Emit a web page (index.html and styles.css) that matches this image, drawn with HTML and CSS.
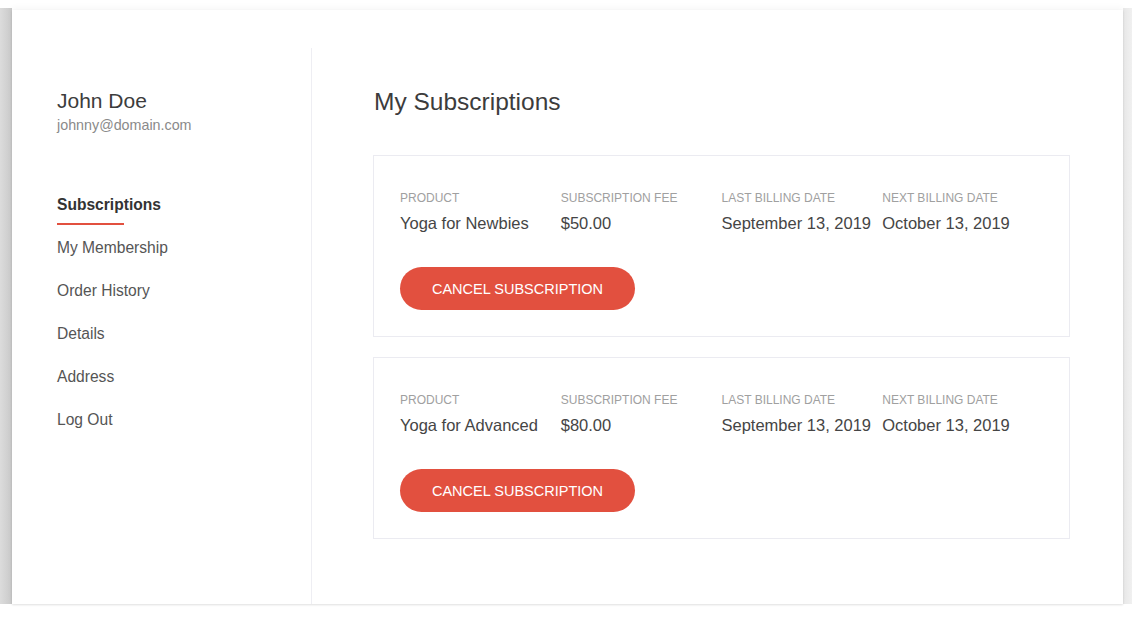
FILE: index.html
```html
<!DOCTYPE html>
<html lang="en">
<head>
<meta charset="utf-8">
<title>My Subscriptions</title>
<link rel="stylesheet" href="styles.css">
</head>
<body>
<div class="page">
  <div class="frame">
    <aside class="sidebar">
      <div class="user">
        <div class="user-name">John Doe</div>
        <div class="user-email">johnny@domain.com</div>
      </div>
      <nav class="nav">
        <a class="nav-item active">Subscriptions</a>
        <a class="nav-item">My Membership</a>
        <a class="nav-item">Order History</a>
        <a class="nav-item">Details</a>
        <a class="nav-item">Address</a>
        <a class="nav-item">Log Out</a>
      </nav>
    </aside>
    <main class="main">
      <h1 class="title">My Subscriptions</h1>
      <section class="sub-card">
        <div class="sub-grid">
          <div class="field"><div class="label">Product</div><div class="value">Yoga for Newbies</div></div>
          <div class="field"><div class="label">Subscription Fee</div><div class="value">$50.00</div></div>
          <div class="field"><div class="label">Last Billing Date</div><div class="value">September 13, 2019</div></div>
          <div class="field"><div class="label">Next Billing Date</div><div class="value">October 13, 2019</div></div>
        </div>
        <button class="btn-cancel">Cancel Subscription</button>
      </section>
      <section class="sub-card">
        <div class="sub-grid">
          <div class="field"><div class="label">Product</div><div class="value">Yoga for Advanced</div></div>
          <div class="field"><div class="label">Subscription Fee</div><div class="value">$80.00</div></div>
          <div class="field"><div class="label">Last Billing Date</div><div class="value">September 13, 2019</div></div>
          <div class="field"><div class="label">Next Billing Date</div><div class="value">October 13, 2019</div></div>
        </div>
        <button class="btn-cancel">Cancel Subscription</button>
      </section>
    </main>
  </div>
</div>
</body>
</html>
```
FILE: styles.css
```css
* { box-sizing: border-box; }
html, body {
  margin: 0;
  padding: 0;
  background: #ffffff;
  font-family: "Liberation Sans", Arial, sans-serif;
}
.page {
  width: 1132px;
  height: 631px;
  padding: 10px 9px 27px 12px;
  background: linear-gradient(to right, #dcdcdc 0, #c9c9c9 12px, #ffffff 12px, #ffffff 1123px, #e8e8e8 1123px, #f0f0f0 1132px);
  background-size: 100% 596px;
  background-repeat: no-repeat;
  background-position: 0 8px;
}
.frame {
  height: 594px;
  background: #ffffff;
  display: flex;
  padding-top: 38px;
  box-shadow: 0 1px 2px rgba(0, 0, 0, 0.12), 0 -3px 6px rgba(0, 0, 0, 0.03);
}
.sidebar {
  width: 300px;
  flex: none;
  border-right: 1px solid #eeeef3;
  padding: 41px 0 0 45px;
}
.user-name {
  font-size: 21px;
  line-height: 24px;
  color: #3c3c3c;
}
.user-email {
  margin-top: 4px;
  font-size: 14.3px;
  line-height: 17px;
  color: #8a8a8a;
}
.nav {
  display: flex;
  flex-direction: column;
  margin-top: 62px;
}
.nav-item {
  font-size: 15.6px;
  line-height: 18px;
  height: 43px;
  color: #555555;
  cursor: pointer;
}
.nav-item.active {
  font-weight: bold;
  color: #333333;
}
.nav-item.active::after {
  content: "";
  display: block;
  width: 67px;
  height: 2px;
  margin-top: 9px;
  background: #e2503f;
}
.main {
  flex: 1;
  padding: 40px 53px 0 61px;
}
.title {
  margin: 0 0 39px 0;
  padding-left: 1px;
  font-size: 24.5px;
  line-height: 28px;
  font-weight: normal;
  color: #3c3c3c;
}
.sub-card {
  border: 1px solid #ebebf1;
  padding: 35px 26px 26px 26px;
  margin-bottom: 20px;
}
.sub-grid {
  display: grid;
  grid-template-columns: repeat(4, 1fr);
}
.label {
  font-size: 12px;
  line-height: 14px;
  text-transform: uppercase;
  color: #a0a0a0;
}
.value {
  margin-top: 8px;
  font-size: 16.5px;
  line-height: 20px;
  color: #454545;
  white-space: nowrap;
}
.btn-cancel {
  margin-top: 34px;
  height: 43px;
  width: 235px;
  border: none;
  border-radius: 22px;
  background: #e2503f;
  color: #ffffff;
  font-family: "Liberation Sans", Arial, sans-serif;
  font-size: 14.5px;
  text-transform: uppercase;
  cursor: pointer;
  padding: 0;
}
```
